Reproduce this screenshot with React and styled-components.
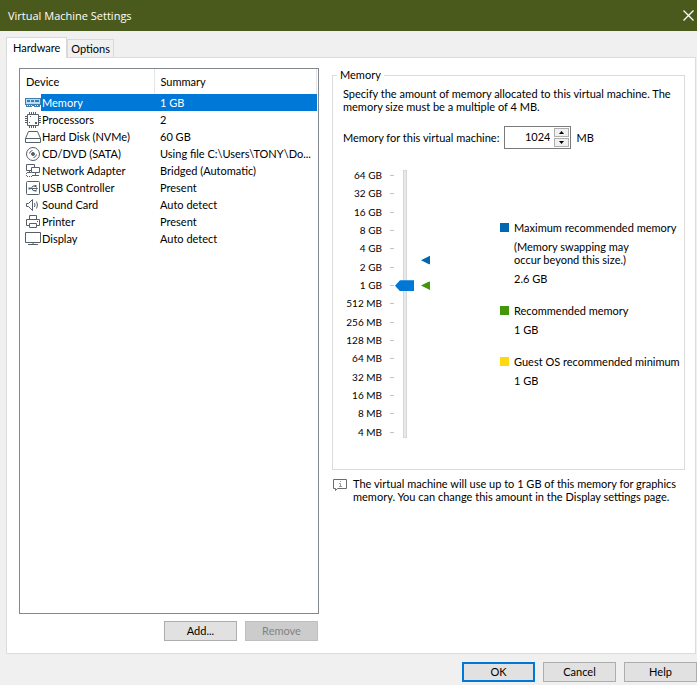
import { useState } from 'react'
import styled, { createGlobalStyle, css } from 'styled-components'

const devices = [
    { name: 'Memory', summary: '1 GB', icon: 'memory' },
    { name: 'Processors', summary: '2', icon: 'cpu' },
    { name: 'Hard Disk (NVMe)', summary: '60 GB', icon: 'disk' },
    { name: 'CD/DVD (SATA)', summary: 'Using file C:\\Users\\TONY\\Do...', icon: 'cd' },
    { name: 'Network Adapter', summary: 'Bridged (Automatic)', icon: 'network' },
    { name: 'USB Controller', summary: 'Present', icon: 'usb' },
    { name: 'Sound Card', summary: 'Auto detect', icon: 'sound' },
    { name: 'Printer', summary: 'Present', icon: 'printer' },
    { name: 'Display', summary: 'Auto detect', icon: 'display' },
]

const sizes = [
    '64 GB', '32 GB', '16 GB', '8 GB', '4 GB', '2 GB', '1 GB',
    '512 MB', '256 MB', '128 MB', '64 MB', '32 MB', '16 MB', '8 MB', '4 MB',
]

const legend = [
    { color: '#0067b0', title: 'Maximum recommended memory', note: ['(Memory swapping may', 'occur beyond this size.)'], value: '2.6 GB' },
    { color: '#43960c', title: 'Recommended memory', value: '1 GB' },
    { color: '#ffd90f', title: 'Guest OS recommended minimum', value: '1 GB' },
]

// the slider counts in powers of two, 4 MB is step 0
const toStep = (mb) => Math.log2(mb / 4)
const lastStep = sizes.length - 1

const icons = {
    memory: (
        <>
            <path d="M0 3h16v7h-1v2H9v-1H7v1H1v-2H0z" fill="#3f7fae" />
            <path d="M1 4h14v5H1z" fill="#b9dcf2" />
            <path d="M2 5h3v2H2zM6 5h3v2H6zM10 5h4v2h-4z" fill="#3f7fae" />
            <path d="M2 10h1v1H2zM4 10h1v1H4zM6 10h1v1H6zM10 10h1v1h-1zM12 10h1v1h-1z" fill="#d9edf8" />
        </>
    ),
    cpu: (
        <>
            <path d="M2.500 2.500h11v11h-11z" />
            <path d="M4.500 0v2M6.500 0v2M8.500 0v2M10.500 0v2M4.500 14v2M6.500 14v2M8.500 14v2M10.500 14v2M0 4.500h2M0 6.500h2M0 8.500h2M0 10.500h2M14 4.500h2M14 6.500h2M14 8.500h2M14 10.500h2" />
            <path d="M5 4h1v1H5zM10 10h2v2h-2zM4 10h1v1H4z" fill="#56606b" />
        </>
    ),
    disk: <path d="M3.500 2.500h9l3 7v4H.5v-4zM.5 9.500h15" />,
    cd: (
        <>
            <circle cx="8" cy="8" r="6.500" />
            <circle cx="8" cy="8" r="1.500" fill="#56606b" />
            <path d="M4.500 7.500a3.500 3.500 0 0 1 3-3M11.500 8.500a3.500 3.500 0 0 1-3 3" />
        </>
    ),
    network: (
        <>
            <path d="M6 7.500H1.500v-6h8V4M4.500 7.500v2M2 9.500h4" />
            <path d="M6.500 4.500h8v5h-8zM10.500 9.500v3M7 12.500h7" />
            <path d="M1.500 10v4M2 13.500h6" strokeDasharray="1 1" />
        </>
    ),
    usb: (
        <>
            <rect x="1.500" y="1.500" width="13" height="13" rx="1" />
            <path d="M4 8.500h7M6 8.500l2-2.500h2M7 8.500l1 2h2" />
            <path d="M3.500 7.500h2v2h-2zM9.500 5h2v2h-2zM9.500 10h2v1.500h-2zM11 7l2 1.500L11 10z" fill="#56606b" />
        </>
    ),
    sound: (
        <>
            <path d="M1.500 6.500h2l4-4v11l-4-4h-2z" />
            <path d="M9.500 6q1 2 0 4M11.500 4.500q2 3.500 0 7" />
        </>
    ),
    printer: (
        <>
            <path d="M4.500 5.500v-4h7v4M4.500 11.500h-3v-6h13v6h-3" />
            <path d="M4.500 9.500h7v4h-7zM12 7.500h1" />
        </>
    ),
    display: <path d="M.5 1.500h15v10H.5zM3 13.500h10M8 12v1" />,
}

const DeviceIcon = ({ name }) => (
    <Glyph viewBox="0 0 16 16" aria-hidden="true">
        {icons[name]}
    </Glyph>
)

const App = () => {
    const [selected, setSelected] = useState('Memory')
    const [memory, setMemory] = useState(1024)

    return (
        <>
            <GlobalStyle />
            <Window>
                <TitleBar>
                    <Title>Virtual Machine Settings</Title>
                    <CloseButton aria-label="Close">
                        <svg width="11" height="11" viewBox="0 0 11 11">
                            <path d="M.5.5l10 10M10.500.5l-10 10" stroke="#fff" strokeWidth="1.300" />
                        </svg>
                    </CloseButton>
                </TitleBar>

                <Tabs role="tablist">
                    <Tab role="tab" aria-selected="true" $active>Hardware</Tab>
                    <Tab role="tab" aria-selected="false">Options</Tab>
                </Tabs>

                <Panel>
                    <Devices>
                        <ListBox>
                            <DeviceTable>
                                <colgroup>
                                    <IconCol />
                                    <NameCol />
                                    <col />
                                </colgroup>
                                <thead>
                                    <tr>
                                        <HeadCell colSpan="2">Device</HeadCell>
                                        <HeadCell>Summary</HeadCell>
                                    </tr>
                                </thead>
                                <tbody>
                                    {devices.map(({ name, summary, icon }) => (
                                        <DeviceRow
                                            key={name}
                                            $selected={name === selected}
                                            onClick={() => setSelected(name)}
                                        >
                                            <IconCell><DeviceIcon name={icon} /></IconCell>
                                            <NameCell>{name}</NameCell>
                                            <SummaryCell>{summary}</SummaryCell>
                                        </DeviceRow>
                                    ))}
                                </tbody>
                            </DeviceTable>
                        </ListBox>
                        <Actions>
                            <Button>Add...</Button>
                            <Button disabled>Remove</Button>
                        </Actions>
                    </Devices>

                    <Details>
                        <Group>
                            <GroupTitle>Memory</GroupTitle>
                            <Text>
                                Specify the amount of memory allocated to this virtual machine. The
                                memory size must be a multiple of 4 MB.
                            </Text>

                            <Field>
                                <label htmlFor="memory">Memory for this virtual machine:</label>
                                <Spinner>
                                    <SpinnerInput
                                        id="memory"
                                        value={memory}
                                        onChange={(e) => setMemory(Number(e.target.value) || 4)}
                                    />
                                    <SpinnerButtons>
                                        <SpinnerButton aria-label="Increase" onClick={() => setMemory(memory + 4)}>
                                            <svg width="5" height="3" viewBox="0 0 5 3"><path d="M0 3L2.500 0 5 3z" /></svg>
                                        </SpinnerButton>
                                        <SpinnerButton aria-label="Decrease" onClick={() => setMemory(Math.max(4, memory - 4))}>
                                            <svg width="5" height="3" viewBox="0 0 5 3"><path d="M0 0L2.500 3 5 0z" /></svg>
                                        </SpinnerButton>
                                    </SpinnerButtons>
                                </Spinner>
                                <span>MB</span>
                            </Field>

                            <Scale>
                                <Sizes>
                                    {sizes.map((size) => <Size key={size}>{size}</Size>)}
                                </Sizes>
                                <Slider
                                    type="range"
                                    aria-label="Memory size"
                                    min="0"
                                    max={lastStep}
                                    value={Math.round(toStep(memory))}
                                    onChange={(e) => setMemory(4 * 2 ** Number(e.target.value))}
                                />
                                <Markers>
                                    <Marker $color="#0067b0" style={{ bottom: `${toStep(2662) / lastStep * 100}%` }} />
                                    <Marker $color="#43960c" style={{ bottom: `${toStep(1024) / lastStep * 100}%` }} />
                                </Markers>
                                <Legend>
                                    {legend.map(({ color, title, note, value }) => (
                                        <LegendItem key={title}>
                                            <LegendTitle $color={color}>{title}</LegendTitle>
                                            {note && <LegendText>{note[0]}<br />{note[1]}</LegendText>}
                                            <LegendText>{value}</LegendText>
                                        </LegendItem>
                                    ))}
                                </Legend>
                            </Scale>
                        </Group>

                        <Info>
                            <InfoIcon viewBox="0 0 15 13" aria-hidden="true">
                                <path d="M1.500.5h13v9h-9l-2 2v-2h-2z" />
                                <path d="M8.500 2v1M7 4.500h1.500V8M7 7.500h3" stroke="#9a9a9a" />
                            </InfoIcon>
                            <Text>
                                The virtual machine will use up to 1 GB of this memory for graphics
                                memory. You can change this amount in the Display settings page.
                            </Text>
                        </Info>
                    </Details>
                </Panel>

                <Footer>
                    <Button $primary>OK</Button>
                    <Button>Cancel</Button>
                    <Button>Help</Button>
                </Footer>
            </Window>
        </>
    )
}

export default App

const GlobalStyle = createGlobalStyle`
    * {
        box-sizing : border-box;
    }

    body {
        margin : 0;
    }

    body, button, input {
        font-family : Lato, Tahoma, sans-serif;
        font-size   : 11px;
        line-height : 13px;
        color       : #000;
    }
`

const Window = styled.div`
    display        : flex;
    flex-direction : column;
    min-height     : 100vh;
    background     : #f0f0f0;
`

const TitleBar = styled.header`
    display         : flex;
    align-items     : center;
    justify-content : space-between;
    height          : 31px;
    padding         : 0 3px 0 8px;
    background      : #4a5a1c;
    color           : #fff;
`

const Title = styled.h1`
    margin      : 0;
    font-family : "Open Sans", "Segoe UI", sans-serif;
    font-size   : 11px;
    font-weight : 400;
    line-height : 16px;
`

const CloseButton = styled.button`
    display    : flex;
    padding    : 0;
    border     : 0;
    background : none;
`

const Tabs = styled.div`
    display     : flex;
    align-items : flex-end;
    padding     : 6px 6px 0;
`

const Tab = styled.button`
    height        : 18px;
    padding       : 0 3px;
    border        : 1px solid #d9d9d9;
    border-bottom : 0;
    background    : #f0f0f0;

    ${({ $active }) => $active && css`
        height        : 21px;
        margin-bottom : -1px;
        padding       : 0 6px 2px;
        background    : #fff;
        z-index       : 1;
    `}
`

const Panel = styled.main`
    display               : grid;
    grid-template-columns : 300px 1fr;
    gap                   : 13px;
    flex                  : 1;
    margin                : 0 1px 0 6px;
    padding               : 10px 10px 12px 12px;
    border                : 1px solid #dcdcdc;
    background            : #fff;
`

const Devices = styled.section`
    display        : flex;
    flex-direction : column;
    gap            : 7px;
`

const ListBox = styled.div`
    flex          : 1;
    padding-right : 1px;
    border        : 1px solid #828790;
`

const DeviceTable = styled.table`
    width           : 100%;
    table-layout    : fixed;
    border-collapse : collapse;
`

const IconCol = styled.col`
    width : 21px;
`

const NameCol = styled.col`
    width : 113px;
`

const HeadCell = styled.th`
    height       : 25px;
    padding      : 0 6px;
    border-right : 1px solid #e5e5e5;
    font-weight  : 400;
    text-align   : left;
`

const IconCell = styled.td`
    padding : 0 0 0 5px;
`

const NameCell = styled.td`
    padding     : 0 0 0 1px;
    white-space : nowrap;
`

const SummaryCell = styled.td`
    padding     : 0 0 0 6px;
    white-space : nowrap;
`

const DeviceRow = styled.tr`
    height : 17px;

    ${({ $selected }) => $selected && css`
        ${NameCell}, ${SummaryCell} {
            background : #0078d7;
            color      : #fff;
        }
    `}
`

const Glyph = styled.svg`
    display : block;
    width   : 16px;
    height  : 16px;
    fill    : none;
    stroke  : #56606b;

    path[fill] {
        stroke : none;
    }
`

const Actions = styled.div`
    display         : flex;
    justify-content : flex-end;
    gap             : 8px;
    padding-right   : 1px;
`

const Button = styled.button`
    width      : 73px;
    height     : 20px;
    padding    : 0 0 2px;
    border     : 1px solid #adadad;
    background : #e1e1e1;

    &:disabled {
        border-color : #bfbfbf;
        background   : #ccc;
        color        : #838383;
    }

    ${({ $primary }) => $primary && css`
        border : 2px solid #0078d7;
    `}
`

const Details = styled.section`
    min-width : 0;
`

const Group = styled.fieldset`
    min-width : 0;
    margin    : 0;
    padding   : 5px 10px 30px;
    border    : 1px solid #dcdcdc;
`

const GroupTitle = styled.legend`
    margin-left : -6px;
    padding     : 0 3px;
    line-height : 14px;
`

const Text = styled.p`
    margin : 0;
`

const Field = styled.div`
    display     : flex;
    align-items : center;
    gap         : 5px;
    margin-top  : 13px;
`

const Spinner = styled.div`
    display    : flex;
    width      : 67px;
    height     : 23px;
    padding    : 1px;
    border     : 1px solid #7a7a7a;
    background : #fff;
`

const SpinnerInput = styled.input`
    flex       : 1;
    min-width  : 0;
    padding    : 0 4px 2px 0;
    border     : 0;
    outline    : 0;
    background : none;
    text-align : right;
`

const SpinnerButtons = styled.div`
    display        : flex;
    flex-direction : column;
    gap            : 1px;
    width          : 15px;
`

const SpinnerButton = styled.button`
    display         : flex;
    flex            : 1;
    align-items     : center;
    justify-content : center;
    padding         : 0;
    border          : 1px solid #adadad;
    background      : #f0f0f0;
`

const Scale = styled.div`
    display    : flex;
    margin-top : 20px;
`

const Sizes = styled.div`
    display         : flex;
    flex            : none;
    flex-direction  : column;
    justify-content : space-between;
    width           : 51px;
    height          : 270px;
    margin-right    : 1px;
    font-size       : 10px;
`

const Size = styled.div`
    display         : flex;
    align-items     : center;
    justify-content : flex-end;
    gap             : 8px;
    white-space     : nowrap;

    &::after {
        content    : '';
        width      : 4px;
        height     : 1px;
        background : #c4c4c4;
    }
`

const Slider = styled.input`
    appearance   : none;
    writing-mode : vertical-lr;
    direction    : rtl;
    flex         : none;
    width        : 19px;
    height       : 268px;
    margin       : 1px 0;
    background   : linear-gradient(#e7eaea, #e7eaea) 9px 1px / 2px 266px no-repeat,
                   linear-gradient(#d6d6d6, #d6d6d6) 8px 0 / 4px 268px no-repeat;

    &::-webkit-slider-thumb {
        appearance : none;
        width      : 19px;
        height     : 11px;
        background : #0078d7;
        clip-path  : polygon(0 50%, 5px 0, 100% 0, 100% 100%, 5px 100%);
    }
`

const Markers = styled.div`
    position : relative;
    flex     : none;
    width    : 9px;
    margin   : 6px 0 6px 7px;
`

const Marker = styled.div`
    position   : absolute;
    left       : 0;
    width      : 9px;
    height     : 9px;
    transform  : translateY(50%);
    background : ${({ $color }) => $color};
    clip-path  : polygon(0 50%, 100% 0, 100% 100%);
`

const Legend = styled.ul`
    display        : flex;
    flex-direction : column;
    gap            : 19px;
    margin         : 0 0 0 70px;
    padding        : 52px 0 0;
    list-style     : none;
`

const LegendItem = styled.li`
    display        : flex;
    flex-direction : column;
    gap            : 6px;
`

const LegendTitle = styled.div`
    display     : flex;
    align-items : center;
    gap         : 5px;
    white-space : nowrap;

    &::before {
        content    : '';
        width      : 9px;
        height     : 9px;
        background : ${({ $color }) => $color};
    }
`

const LegendText = styled.div`
    padding-left : 14px;
`

const Info = styled.div`
    display    : flex;
    gap        : 6px;
    margin-top : 7px;
`

const InfoIcon = styled.svg`
    flex       : none;
    width      : 15px;
    height     : 13px;
    margin-top : 2px;
    fill       : none;
    stroke     : #6b6b6b;
`

const Footer = styled.footer`
    display         : flex;
    justify-content : flex-end;
    gap             : 8px;
    padding         : 8px 0 3px;
`
